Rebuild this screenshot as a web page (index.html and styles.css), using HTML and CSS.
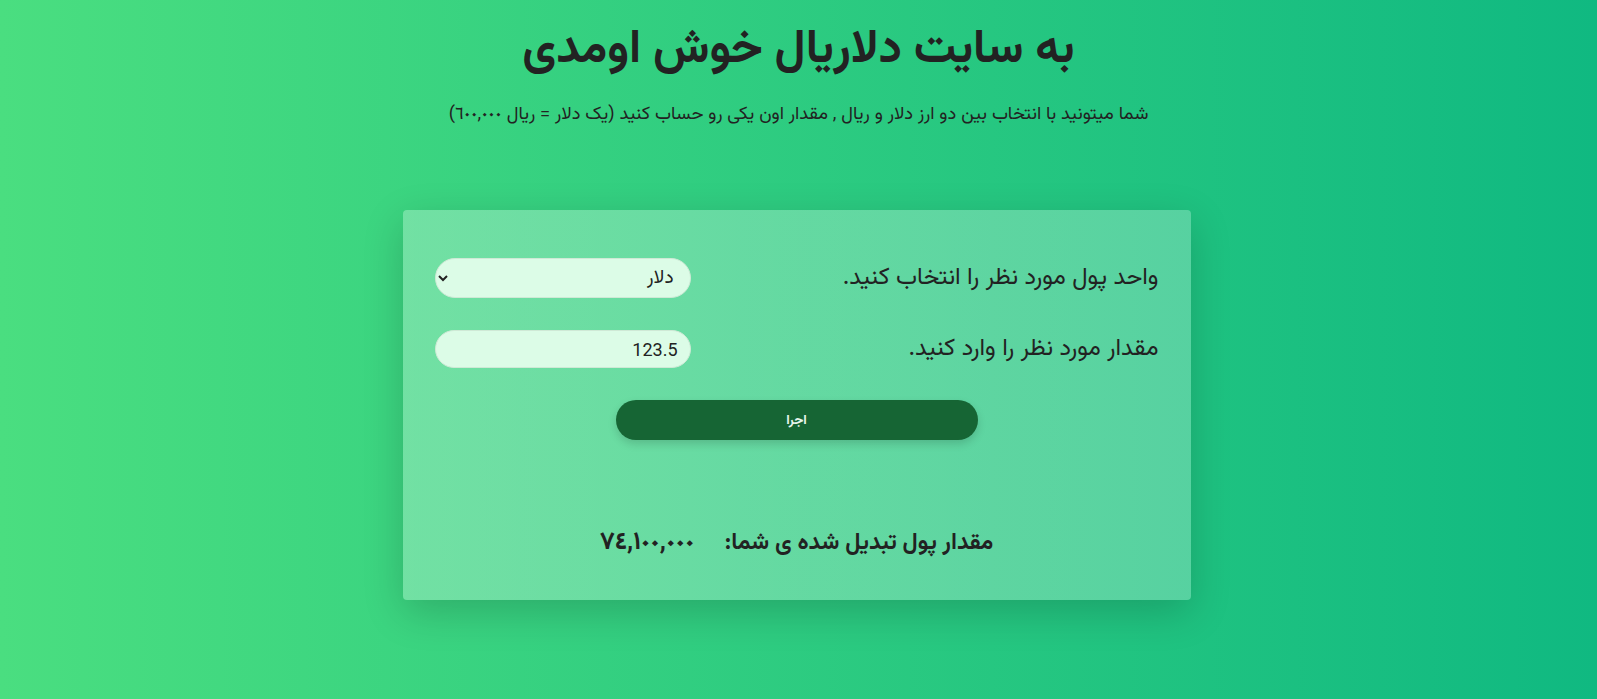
FILE: index.html
```html
<!DOCTYPE html>
<html lang="fa" dir="rtl">
<head>
<meta charset="utf-8">
<title>دلاریال</title>
<link rel="stylesheet" href="styles.css">
</head>
<body>
<main class="page">
  <header class="hero">
    <h1 class="hero-title">به سایت دلاریال خوش اومدی</h1>
    <p class="hero-sub">شما میتونید با انتخاب بین دو ارز دلار و ریال , مقدار اون یکی رو حساب کنید (یک دلار = ریال ٦٠٠,٠٠٠)</p>
  </header>
  <section class="card">
    <div class="row">
      <label class="row-label" for="unit">واحد پول مورد نظر را انتخاب کنید.</label>
      <select id="unit" class="field field-select">
        <option>دلار</option>
        <option>ریال</option>
      </select>
    </div>
    <div class="row">
      <label class="row-label" for="amount">مقدار مورد نظر را وارد کنید.</label>
      <input id="amount" class="field field-input" type="text" value="123.5">
    </div>
    <div class="actions">
      <button class="run-btn" type="button">اجرا</button>
    </div>
    <p class="result"><span>مقدار پول تبدیل شده ی شما:</span><span class="result-num">٧٤,١٠٠,٠٠٠</span></p>
  </section>
</main>
</body>
</html>
```
FILE: styles.css
```css
* { box-sizing: border-box; }
html, body { margin: 0; height: 100%; }
body {
  font-family: "Vazirmatn", "Noto Sans Arabic", "DejaVu Sans", sans-serif;
  color: #1f2a24;
  background: linear-gradient(90deg, #4ade80 0%, #10b981 100%);
  min-height: 699px;
}
.page {
  display: flex;
  flex-direction: column;
  align-items: center;
}
.hero {
  text-align: center;
}
.hero-title {
  margin: 23px 0 0;
  font-size: 47px;
  line-height: 56px;
  font-weight: bold;
  color: #222;
}
.hero-sub {
  margin: 25px 0 0;
  font-size: 18.3px;
  line-height: 22px;
  color: #222;
}
.card {
  margin-top: 84px;
  width: 788px;
  height: 390px;
  padding: 48px 32px 0;
  border-radius: 4px;
  background: linear-gradient(90deg, rgba(255,255,255,0.28), rgba(255,255,255,0.25));
  box-shadow: 0 12px 40px rgba(0,0,0,0.18);
  display: flex;
  flex-direction: column;
  transform: translateX(-2px);
}
.row {
  display: flex;
  align-items: center;
  justify-content: space-between;
}
.row + .row { margin-top: 32px; }
.row-label {
  font-size: 24px;
  line-height: 30px;
  color: #222;
}
.field {
  width: 256px;
  border: 1px solid #cfe9d6;
  border-radius: 20px;
  background: #dcfce7;
  color: #222;
  outline: none;
}
.field-select {
  height: 40px;
  font-family: inherit;
  font-size: 19px;
  padding: 0 12px 0 6px;
}
.field-input {
  height: 38px;
  font-family: Roboto, "Liberation Sans", sans-serif;
  font-size: 18px;
  text-align: right;
  padding: 0 12px;
}
.actions {
  display: flex;
  justify-content: center;
  margin-top: 32px;
}
.run-btn {
  width: 362px;
  height: 40px;
  border: none;
  border-radius: 20px;
  background: #166534;
  color: #e8f5ec;
  font-family: inherit;
  font-weight: bold;
  font-size: 13.5px;
  box-shadow: 0 4px 8px rgba(0,0,0,0.15);
}
.result {
  margin: 88px 0 0;
  text-align: center;
  font-size: 23px;
  line-height: 30px;
  font-weight: bold;
  color: #222;
  display: flex;
  justify-content: center;
  gap: 30px;
}
.result-num { font-size: 25px; }
```
